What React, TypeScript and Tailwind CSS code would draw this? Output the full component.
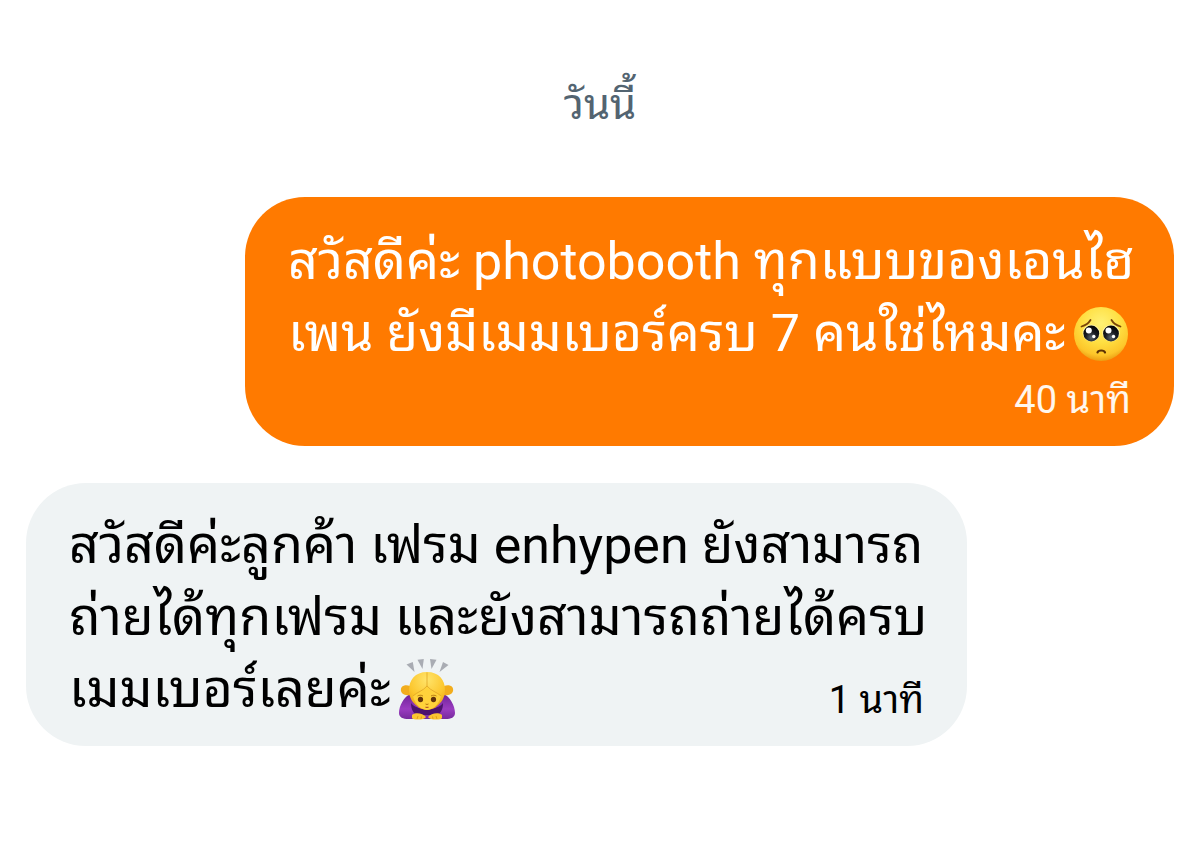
import React from "react";

// --- Data ---
type Message = {
  id: number;
  sent: boolean;
  lines: string[];
  emoji: React.ReactNode;
  time: string;
};

// --- Emoji ---

function PleadingFace() {
  return (
    <svg viewBox="0 0 54 56" role="img" aria-label="pleading face" className="h-14 w-14 shrink-0">
      <defs>
        <radialGradient id="face" cx="0.5" cy="0.3" r="0.72">
          <stop offset="0" stopColor="#fff176" />
          <stop offset="0.5" stopColor="#ffdf42" />
          <stop offset="0.82" stopColor="#fdc62a" />
          <stop offset="1" stopColor="#e8960f" />
        </radialGradient>
        <radialGradient id="eye" cx="0.5" cy="0.75" r="0.7">
          <stop offset="0" stopColor="#5c6670" />
          <stop offset="0.5" stopColor="#1a1c22" />
          <stop offset="1" stopColor="#050507" />
        </radialGradient>
      </defs>
      <circle cx="27" cy="28" r="27" fill="url(#face)" />
      <path d="M7.5 20.5C11 19.5 14.5 17.5 16.5 14" fill="none" stroke="#7a4508" strokeWidth="1.8" strokeLinecap="round" />
      <path d="M46.5 20.5C43 19.5 39.5 17.5 37.5 14" fill="none" stroke="#7a4508" strokeWidth="1.8" strokeLinecap="round" />
      <ellipse cx="17.3" cy="27" rx="8.8" ry="8.6" fill="#fff3a0" />
      <ellipse cx="37" cy="27" rx="8.8" ry="8.6" fill="#fff3a0" />
      <circle cx="17.3" cy="27.5" r="7.9" fill="url(#eye)" />
      <circle cx="37" cy="27.5" r="7.9" fill="url(#eye)" />
      <circle cx="14.8" cy="24.5" r="3" fill="#fff" />
      <circle cx="34.5" cy="24.5" r="3" fill="#fff" />
      <circle cx="19.8" cy="30.5" r="1.7" fill="#fff" />
      <circle cx="39.5" cy="30.5" r="1.7" fill="#fff" />
      <path d="M23.5 46.5C24.2 43.8 30.2 43.8 31 46.5" fill="none" stroke="#5e3204" strokeWidth="2.2" strokeLinecap="round" />
    </svg>
  );
}

function BowingWoman() {
  return (
    <svg viewBox="0 0 56 62" role="img" aria-label="woman bowing" className="h-16 w-14 shrink-0">
      <defs>
        <radialGradient id="hair" cx="0.5" cy="0.2" r="0.85">
          <stop offset="0" stopColor="#ffe46b" />
          <stop offset="0.6" stopColor="#fcc62d" />
          <stop offset="1" stopColor="#e89c12" />
        </radialGradient>
        <linearGradient id="sleeve" x1="0" y1="0" x2="0" y2="1">
          <stop offset="0" stopColor="#6f2398" />
          <stop offset="0.6" stopColor="#9a3cc0" />
          <stop offset="1" stopColor="#762a9c" />
        </linearGradient>
      </defs>
      <g fill="#a9acb3">
        <path d="M7.500 5.500L13.800 3L15.500 13Z" />
        <path d="M18.500 0.800L24.800 0L23.500 10Z" />
        <path d="M31 0L37.500 0.800L32.500 10Z" />
        <path d="M44 3L49.500 6L40.500 13Z" />
      </g>
      {/* sleeves and the shadow under the chin */}
      <path d="M12 35C5 37 0 47 0 54C0 59 5 60.500 12 60H44C51 60.500 56 59 56 54C56 47 51 37 44 35Z" fill="url(#sleeve)" />
      <path d="M12 44C18 52 38 52 44 44C44 50 42 54 38 56H18C14 54 12 50 12 44Z" fill="#4c126e" />
      <path d="M11 27C6 25 1 27 2 32C3 36 8 37 13 36Z" fill="#f2ad1d" />
      <path d="M45 27C50 25 55 27 54 32C53 36 48 37 43 36Z" fill="#f2ad1d" />
      <path d="M28 13C16 13 10 21 10 31C10 39 14 44 18 47C22 52 34 52 38 47C42 44 46 39 46 31C46 21 40 13 28 13Z" fill="url(#hair)" />
      <path d="M28 27C24 33 18 34 14 37C16 46 23 51 28 51C33 51 40 46 42 37C38 34 32 33 28 27Z" fill="#ffd23b" />
      <path d="M28 13.500V27C24 32 18 33 14 37M28 27C32 32 38 33 42 37" fill="none" stroke="#e0a424" strokeWidth="0.800" />
      <path d="M18.500 37C20 36 22.500 36 24 37M32 37C33.500 36 36 36 37.500 37" fill="none" stroke="#a8680b" strokeWidth="0.800" />
      <ellipse cx="21.500" cy="40.500" rx="2.600" ry="2.700" fill="#63330b" />
      <ellipse cx="34.500" cy="40.500" rx="2.600" ry="2.700" fill="#63330b" />
      <path d="M26.500 45Q28 46 29.500 45" fill="none" stroke="#ba7610" strokeWidth="1" />
      <path d="M26.500 48Q28 49 29.500 48" fill="none" stroke="#b85b28" strokeWidth="1.200" />
      <path d="M13 56C16 53 24 54 27 58C26 61 14 61.500 13 59Z" fill="#fbc531" />
      <path d="M43 56C40 53 32 54 29 58C30 61 42 61.500 43 59Z" fill="#fbc531" />
      <path d="M18 60L19 57M22 60L22.500 57.500M34 60L33.500 57.500M38 60L37 57" stroke="#dc9614" strokeWidth="0.800" />
    </svg>
  );
}

const messages: Message[] = [
  {
    id: 1,
    sent: true,
    lines: ["สวัสดีค่ะ photobooth ทุกแบบของเอนไฮ", "เพน ยังมีเมมเบอร์ครบ 7 คนใช่ไหมคะ"],
    emoji: <PleadingFace />,
    time: "40 นาที",
  },
  {
    id: 2,
    sent: false,
    lines: ["สวัสดีค่ะลูกค้า เฟรม enhypen ยังสามารถ", "ถ่ายได้ทุกเฟรม และยังสามารถถ่ายได้ครบ", "เมมเบอร์เลยค่ะ"],
    emoji: <BowingWoman />,
    time: "1 นาที",
  },
];

// --- Bubbles ---

function MessageLines({ message }: { message: Message }) {
  const last = message.lines.length - 1;

  return (
    <p className="whitespace-nowrap text-[52px] leading-[72px]">
      {message.lines.map((line, i) => (
        <span key={i} className="flex h-[72px] items-center gap-2">
          <span>{line}</span>
          {i === last && message.emoji}
        </span>
      ))}
    </p>
  );
}

function Bubble({ message }: { message: Message }) {
  if (message.sent) {
    return (
      <article className="w-[929px] self-end rounded-[60px] bg-[#ff7a00] px-[43px] pt-[29px] pb-5 text-white">
        <MessageLines message={message} />
        <time className="block pt-1 text-right text-[38px] leading-[52px] text-orange-50">{message.time}</time>
      </article>
    );
  }

  return (
    <article className="flex w-[941px] items-end justify-between rounded-[60px] bg-[#eff3f4] px-[43px] pt-[27px] pb-5 text-black">
      <MessageLines message={message} />
      <time className="-ml-40 text-[38px] leading-[52px]">{message.time}</time>
    </article>
  );
}

export default function App() {
  return (
    <main className="min-h-screen bg-white px-[26px] pt-[75px] font-['Roboto','Noto_Sans_Thai_Looped','Noto_Looped_Thai','Loma','Garuda','Waree','Umpush','Norasi','FreeSerif',sans-serif]">
      <h2 className="text-center text-[42px] leading-[60px] text-[#536471]">วันนี้</h2>
      <section className="mt-[62px] flex flex-col items-start gap-[37px]">
        {messages.map((message) => (
          <Bubble key={message.id} message={message} />
        ))}
      </section>
    </main>
  );
}
